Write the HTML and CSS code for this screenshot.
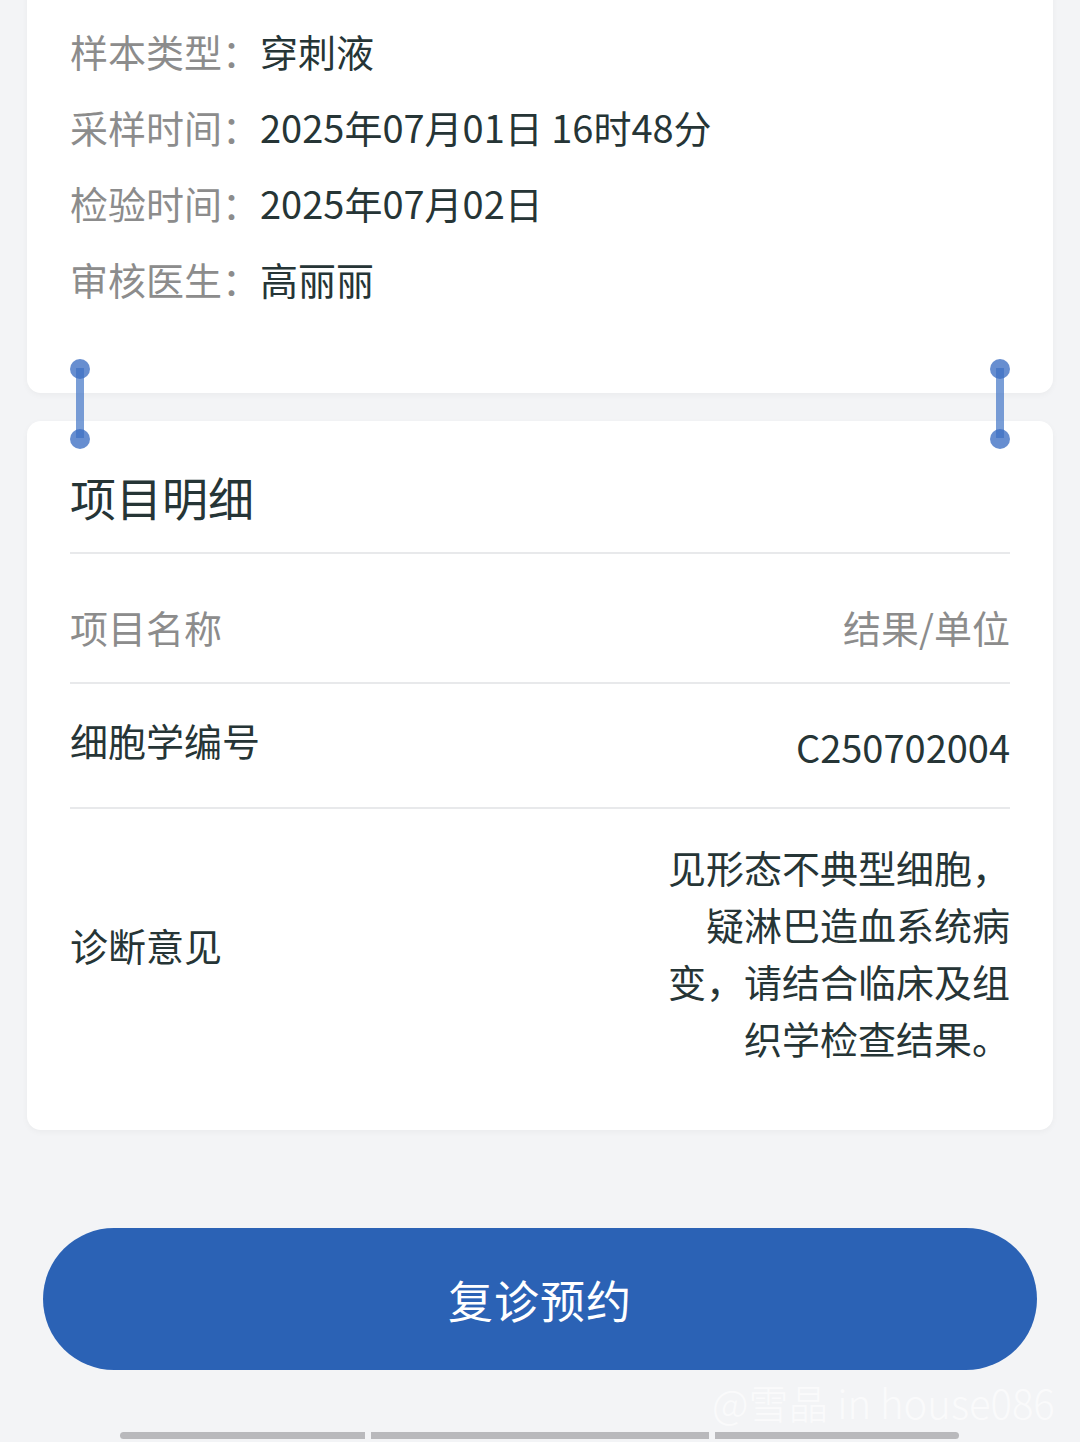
FILE: index.html
```html
<!DOCTYPE html>
<html lang="zh-CN">
<head>
    <meta charset="UTF-8">
    <meta name="viewport" content="width=device-width, initial-scale=1.0">
    <title>检验报告详情</title>
    <link rel="stylesheet" href="styles.css">
</head>
<body>
    <div class="page">
        <div class="card info-card">
            <div class="info-row"><span class="info-label">样本类型：</span><span class="info-value">穿刺液</span></div>
            <div class="info-row"><span class="info-label">采样时间：</span><span class="info-value">2025年07月01日 16时48分</span></div>
            <div class="info-row"><span class="info-label">检验时间：</span><span class="info-value">2025年07月02日</span></div>
            <div class="info-row"><span class="info-label">审核医生：</span><span class="info-value">高丽丽</span></div>
        </div>

        <div class="card detail-card">
            <h2 class="detail-title">项目明细</h2>
            <div class="detail-row head-row">
                <span>项目名称</span>
                <span>结果/单位</span>
            </div>
            <div class="detail-row code-row">
                <span class="row-label">细胞学编号</span>
                <span class="row-value">C250702004</span>
            </div>
            <div class="detail-row diag-row">
                <span class="row-label">诊断意见</span>
                <span class="diag-text">见形态不典型细胞，<br>疑淋巴造血系统病<br>变，请结合临床及组<br>织学检查结果。</span>
            </div>
        </div>

        <button type="button" class="btn-main">复诊预约</button>
    </div>

    <!-- text selection handles -->
    <div class="handle handle-left"></div>
    <div class="handle handle-right"></div>

    <div class="watermark">@雪晶 in house086</div>

    <div class="nav-bars">
        <span class="bar bar-1"></span>
        <span class="bar bar-2"></span>
        <span class="bar bar-3"></span>
    </div>
</body>
</html>
```

FILE: styles.css
```css
body {
    margin: 0;
    height: 1442px;
    overflow: hidden;
    position: relative;
    background-color: #f3f4f6;
    font-family: "Noto Sans CJK SC", "Noto Sans", sans-serif;
    color: #263536;
}
.page {
    padding: 0 27px;
}
.card {
    background-color: #fff;
    border-radius: 14px;
    box-shadow: 0 2px 6px rgba(0, 0, 0, 0.04);
}
.info-card {
    margin-top: -20px;
    padding: 33px 43px 76px;
}
.info-row {
    font-size: 38px;
    line-height: 76px;
    height: 76px;
    white-space: nowrap;
}
.info-label {
    color: #8c8c8c;
}
.info-value {
    color: #263536;
}
.detail-card {
    margin-top: 28px;
    padding: 0 43px 0;
}
.detail-title {
    margin: 0;
    padding: 53px 0 34px;
    font-size: 46px;
    line-height: 44px;
    font-weight: 400;
    color: #263536;
    border-bottom: 2px solid #e8e9eb;
}
.detail-row {
    display: flex;
    justify-content: space-between;
    align-items: center;
    font-size: 38px;
    line-height: 36px;
    border-bottom: 2px solid #e8e9eb;
}
.head-row {
    padding: 55px 0 37px;
    color: #8c8c8c;
}
.code-row {
    height: 123px;
}
.code-row .row-label {
    margin-bottom: 12px;
}
.code-row .row-value {
    margin-top: 2px;
}
.diag-row {
    border-bottom: none;
    padding: 29px 0 64px;
}
.diag-row .row-label {
    margin-bottom: 14px;
}
.diag-text {
    text-align: right;
    line-height: 57px;
}
.btn-main {
    display: block;
    width: calc(100% - 32px);
    height: 142px;
    margin: 98px 16px 0;
    border: none;
    border-radius: 71px;
    background-color: #2b62b5;
    color: #fff;
    font-family: inherit;
    font-size: 45px;
    letter-spacing: 1px;
}
.handle {
    position: absolute;
    top: 359px;
    width: 20px;
    height: 88px;
}
.handle::before {
    content: "";
    position: absolute;
    left: 6px;
    top: 9px;
    width: 8px;
    height: 70px;
    background-color: rgba(70, 120, 200, 0.72);
}
.handle::after {
    content: "";
    position: absolute;
    left: 0;
    top: 0;
    width: 20px;
    height: 20px;
    border-radius: 50%;
    background-color: rgba(60, 110, 195, 0.78);
    box-shadow: 0 70px 0 rgba(60, 110, 195, 0.78);
}
.handle-left {
    left: 70px;
}
.handle-right {
    left: 990px;
}
.watermark {
    position: absolute;
    left: 712px;
    top: 1377px;
    font-family: "Noto Sans CJK SC", "Liberation Sans", sans-serif;
    font-size: 40px;
    font-weight: 300;
    line-height: 50px;
    color: rgba(255, 255, 255, 0.6);
    white-space: nowrap;
}
.nav-bars {
    position: absolute;
    left: 120px;
    top: 1432px;
    display: flex;
    gap: 6px;
}
.bar {
    height: 7px;
    background-color: #b9b9bc;
}
.bar-1 {
    width: 245px;
    border-radius: 4px 0 0 4px;
}
.bar-2 {
    width: 338px;
}
.bar-3 {
    width: 244px;
    border-radius: 0 4px 4px 0;
}
```
